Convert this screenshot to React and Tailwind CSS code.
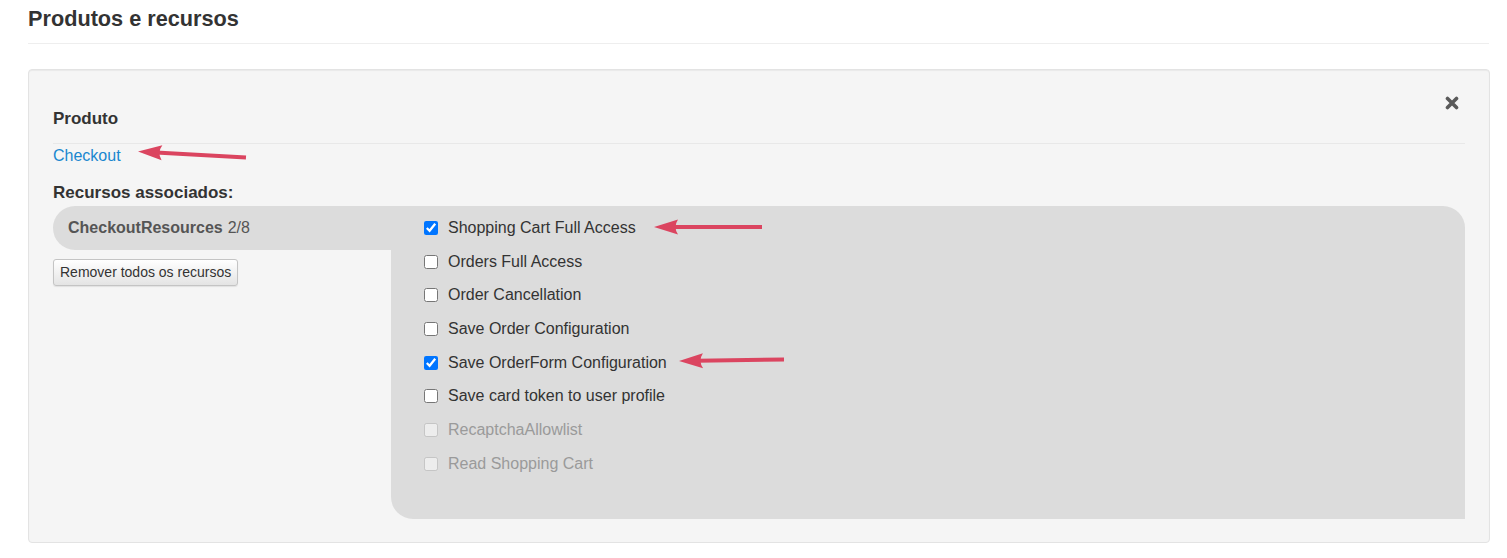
import React from 'react';

const resources = [
  { label: 'Shopping Cart Full Access', checked: true },
  { label: 'Orders Full Access', checked: false },
  { label: 'Order Cancellation', checked: false },
  { label: 'Save Order Configuration', checked: false },
  { label: 'Save OrderForm Configuration', checked: true },
  { label: 'Save card token to user profile', checked: false },
  { label: 'RecaptchaAllowlist', checked: false, disabled: true },
  { label: 'Read Shopping Cart', checked: false, disabled: true },
];

// seta vermelha desenhada por cima da tela
const Arrow = ({ x1, y1, x2, y2 }) => {
  const ang = Math.atan2(y2 - y1, x2 - x1);
  const cos = Math.cos(ang);
  const sin = Math.sin(ang);
  const pt = (a, b) => `${x1 + a * cos - b * sin},${y1 + a * sin + b * cos}`;
  return (
    <g fill="#db4560">
      <path d={`M${pt(0, 0)} L${pt(24, -7.5)} Q${pt(19, 0)} ${pt(24, 7.5)} Z`} />
      <line x1={x1 + 18 * cos} y1={y1 + 18 * sin} x2={x2} y2={y2} stroke="#db4560" strokeWidth="4" />
    </g>
  );
};

export default function App() {
  return (
    <div className="relative min-h-[558px] bg-white pl-[28px] pr-[18px] pt-[6px] text-[#333]" style={{ fontFamily: '"Liberation Sans", Arial, sans-serif' }}>
      <h1 className="border-b border-[#eee] pb-[11px] text-[21.7px] font-bold leading-[26px] text-[#333]">Produtos e recursos</h1>

      <div className="mt-[25px] w-[1462px] rounded-[4px] border border-[#e3e3e3] bg-[#f5f5f5] px-[24px] pb-[23px] pt-[26px] shadow-[inset_0_1px_1px_rgba(0,0,0,0.05)]">
        <div className="flex items-start">
          <div className="mt-[13px] flex-1 border-b border-[#e8e8e8] pb-[14px]">
            <h2 className="text-[17px] font-bold leading-[20px] text-[#333]">Produto</h2>
          </div>
          <button className="ml-[-20px] mr-[6px] flex h-[14px] w-[14px] items-center justify-center">
            <svg width="14" height="14" viewBox="0 0 14 14">
              <path d="M2.5 2.5 L11.5 11.5 M11.5 2.5 L2.5 11.5" stroke="#5a5a5a" strokeWidth="3.6" strokeLinecap="round" />
            </svg>
          </button>
        </div>

        <a href="#" className="mt-[2px] block text-[16px] leading-[20px] text-[#1a87cf]">Checkout</a>

        <h3 className="mt-[17px] text-[17px] font-bold leading-[20px] text-[#333]">Recursos associados:</h3>

        <div className="mt-[3px] flex">
          <div className="w-[338px]">
            <div className="flex h-[44px] items-center rounded-l-[22px] bg-[#dcdcdc] pl-[15px] text-[16px] text-[#555]">
              <span className="font-bold">CheckoutResources</span>
              <span className="ml-[5px]">2/8</span>
            </div>
            <button className="mt-[9px] h-[27px] rounded-[3px] border border-[#c4c4c4] bg-gradient-to-b from-white to-[#e4e4e4] px-[6px] text-[14px] leading-[25px] text-[#333] shadow-[0_1px_1px_rgba(0,0,0,0.08)]">
              Remover todos os recursos
            </button>
          </div>

          <div className="h-[313px] flex-1 rounded-bl-[22px] rounded-tr-[22px] bg-[#dcdcdc] pl-[33px] pt-[5px]">
            {resources.map((r) => (
              <label key={r.label} className="flex h-[33.7px] items-center gap-[10px] text-[16px]">
                <input
                  type="checkbox"
                  defaultChecked={r.checked}
                  disabled={r.disabled}
                  className="m-0 h-[14px] w-[14px] accent-[#0075ff]"
                />
                <span className={r.disabled ? 'text-[#9a9a9a]' : 'text-[#333]'}>{r.label}</span>
              </label>
            ))}
          </div>
        </div>
      </div>

      <svg className="pointer-events-none absolute left-0 top-0" width="1507" height="558">
        <Arrow x1={138} y1={151.5} x2={246} y2={157.5} />
        <Arrow x1={654} y1={227} x2={762} y2={227} />
        <Arrow x1={679} y1={361} x2={784} y2={359.5} />
      </svg>
    </div>
  );
}
